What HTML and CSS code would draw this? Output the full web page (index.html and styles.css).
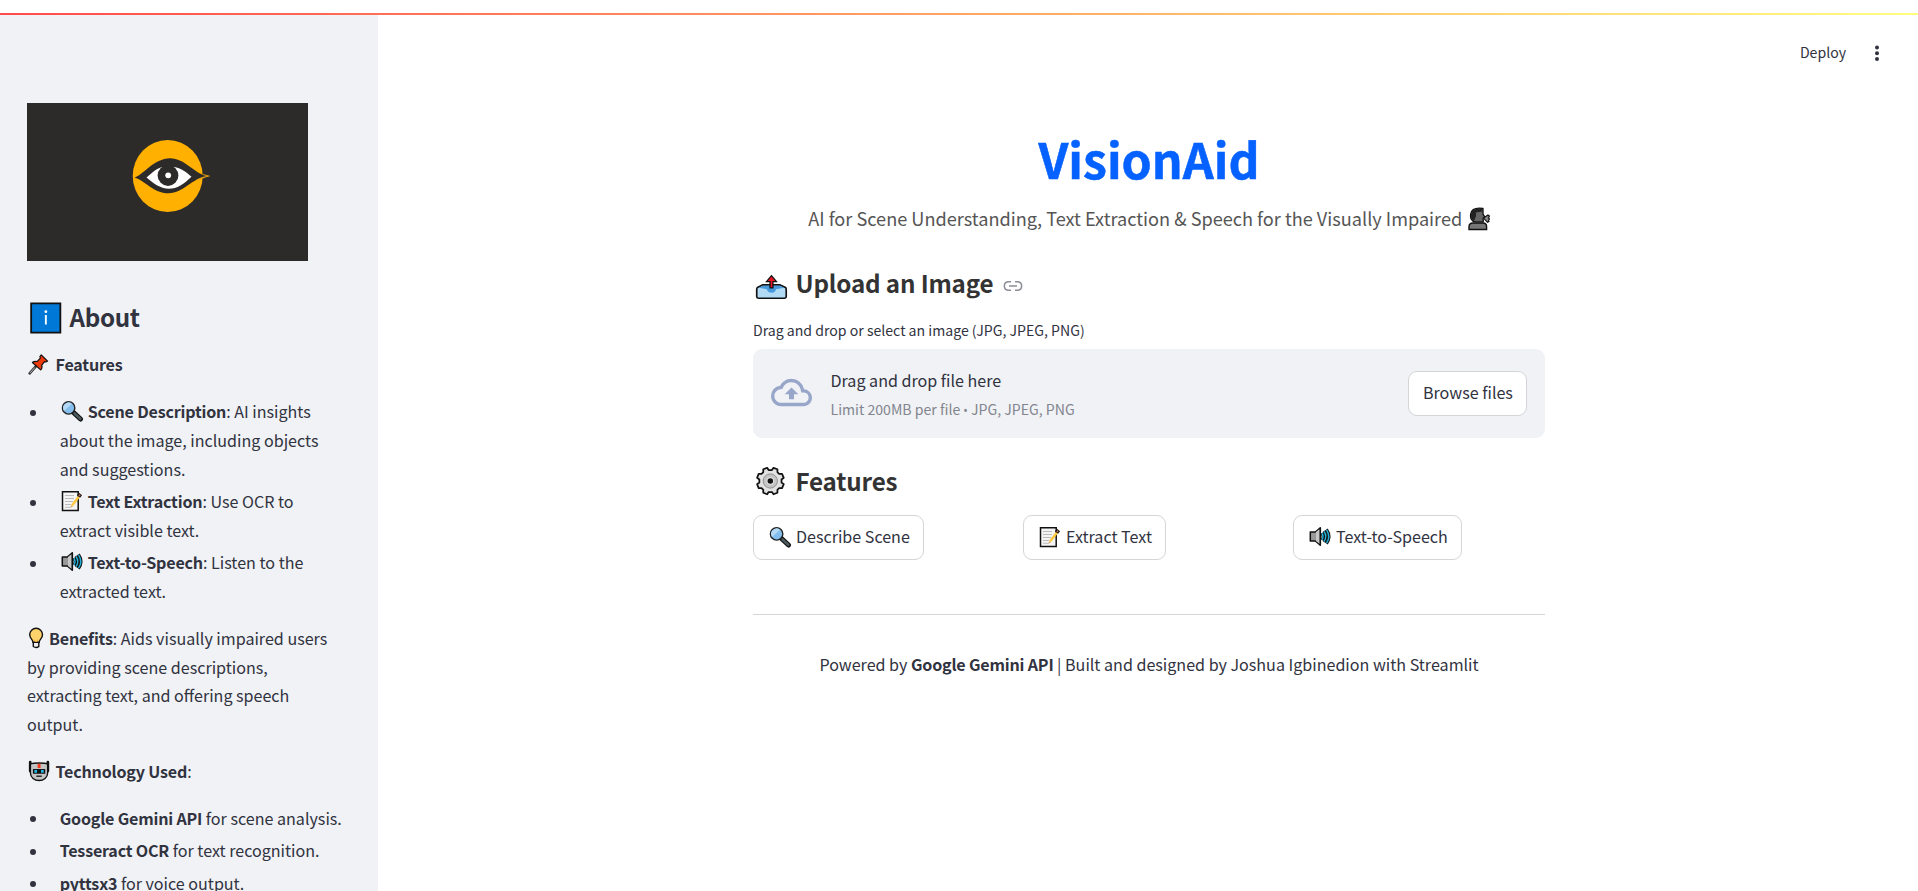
FILE: index.html
```html
<!DOCTYPE html>
<html lang="en">
<head>
<meta charset="utf-8">
<title>VisionAid</title>
<link rel="stylesheet" href="styles.css">
</head>
<body>
<svg class="defs" width="0" height="0" aria-hidden="true">
  <symbol id="glass" viewBox="0 0 28 22">
    <path d="M13.5 12.5 20.500 19" stroke="#111" stroke-width="5" stroke-linecap="round"/>
    <path d="M14.500 13.500 20.300 18.800" stroke="#4b5a5e" stroke-width="2.600" stroke-linecap="round"/>
    <circle cx="8.600" cy="7.900" r="6.200" fill="#83beec" stroke="#222" stroke-width="1.400"/>
    <path d="M4 11A5.500 5.500 0 0 1 12 3.700z" fill="#b5daf5"/>
  </symbol>
  <symbol id="memo" viewBox="0 0 28 22">
    <path d="M2.500 1.800h15.700v18.700H2.500z" fill="#f4f4f4" stroke="#111" stroke-width="1.500"/>
    <path d="M5 5.500h9M5 8.500h9M5 11.500h8M5 14.500h6M5 17.300h6" stroke="#bbb" stroke-width="1.100"/>
    <path d="M12 15.500 19 6.500" stroke="#fdc83c" stroke-width="2.400"/>
    <path d="m18.500 6.500 2-2.500" stroke="#111" stroke-width="4"/>
    <path d="m19 6 1.200-1.500" stroke="#b66a55" stroke-width="1.700"/>
    <path d="m10.500 17.500.8-2.300 1.600 1.200z" fill="#d59c55"/>
  </symbol>
  <symbol id="speaker" viewBox="0 0 28 22">
    <path d="M2.300 6h5l5-4.200v17.400L7.300 15h-5z" fill="#999" stroke="#111" stroke-width="1.500" stroke-linejoin="round"/>
    <path d="M8 6v9l3.700 3V3z" fill="#c7c7c7"/>
    <path d="M14 7q2 3.500 0 7M16 5q3.800 5.500 0 11M18.500 3.300q5 7.200 0 14.400" fill="none" stroke="#111" stroke-width="3"/>
    <path d="M14 7.300q2 3.200 0 6.400M16 5.500q3.600 5 0 10M18.500 3.800q4.600 6.700 0 13.400" fill="none" stroke="#24b6df" stroke-width="1.400"/>
    <path d="M12.300 1.800v17.400" stroke="#111" stroke-width="1.500"/>
  </symbol>
</svg>

<div class="topbar"></div>
<div class="app">
  <aside class="sidebar">
    <svg class="logo" viewBox="0 0 281 158">
      <rect width="281" height="158" fill="#2d2b29"/>
      <ellipse cx="140.700" cy="73" rx="35" ry="36" fill="#ffb000"/>
      <path d="M172 70.500q6 .9 11.500 2.500-6 1.500-11.500 4z" fill="#e8a213"/>
      <path d="M107.500 74.700C116 72 127 55.500 143 55.300c15 0 24 15.200 37 17.800-15 2-23 17.200-38.500 17.200C126 90.300 118 77 107.500 74.700z" fill="#2d2b29"/>
      <path d="M119.500 74.500C126 69 130 65 136 64q5-1 11 0c7 1 12 5 17.500 9.700C157 81 150 85.700 142 85.700c-9 0-16-5.700-22.500-11.200z" fill="#fff"/>
      <circle cx="141" cy="72.500" r="10.400" fill="#2d2b29"/>
      <path d="M134.500 63.300 137 67h8l2-4z" fill="#2d2b29"/>
      <circle cx="141.200" cy="72.300" r="2.900" fill="#fff"/>
    </svg>

    <h2 class="about"><svg class="info" viewBox="0 0 42 32"><path d="M3.900 1.400h29.200v29.200H3.900z" fill="#0078d7" stroke="#111" stroke-width="1.800"/><path d="M18.600 13v9.500" stroke="#fff" stroke-width="1.900"/><circle cx="18.600" cy="9.700" r="1.400" fill="#fff"/></svg>About</h2>

    <p class="line"><svg class="em29" viewBox="0 0 29 22"><path d="M2.700 20.500 9 13.500" stroke="#333" stroke-width="2.600" stroke-linecap="round"/><path d="M3 20.200 8 14.500" stroke="#ccc" stroke-width=".9"/><path d="m14.500 1.800 6.500 6.200-1.800 1-1.400-.4-2.900 3.700c.8 2 .2 3.600-1 4.700L5.500 9.500c1.400-1.300 3-1.500 4.700-1L13.600 5l-.5-1.500z" fill="#ec3a0c" stroke="#111" stroke-width="1.200" stroke-linejoin="round"/></svg><b>Features</b></p>

    <ul class="list">
      <li><div><svg class="em28"><use href="#glass"/></svg><b>Scene Description</b>: AI insights<br>about the image, including objects<br>and suggestions.</div></li>
      <li><div><svg class="em28"><use href="#memo"/></svg><b>Text Extraction</b>: Use OCR to<br>extract visible text.</div></li>
      <li><div><svg class="em28"><use href="#speaker"/></svg><b>Text-to-Speech</b>: Listen to the<br>extracted text.</div></li>
    </ul>

    <p class="line"><svg class="em22" viewBox="0 0 22 22"><path d="M6.300 15v4.500q3 2 5.500 0V15z" fill="#eee" stroke="#111" stroke-width="1.400"/><path d="M6 15.200C6 12.500 2.700 11.500 2.700 7.700a6.400 6.400 0 0 1 12.800 0c0 3.800-3.300 4.800-3.300 7.500z" fill="#ffd36b" stroke="#111" stroke-width="1.400"/><path d="M7.200 12.500 9 15l1.800-2.500" fill="none" stroke="#f4ae35" stroke-width="1"/></svg><b>Benefits</b>: Aids visually impaired users<br>by providing scene descriptions,<br>extracting text, and offering speech<br>output.</p>

    <p class="line tech"><svg class="em29" viewBox="0 0 29 22"><path d="M3.300 2v9M21.200 2v9" stroke="#111" stroke-width="2.800" stroke-linecap="round"/><path d="M3.500 4c3-1.500 14.500-1.500 17.500 0v9c0 4.500-4 7.700-8.700 7.700S3.500 17.500 3.500 13z" fill="#c4c4c4" stroke="#111" stroke-width="1.400"/><path d="M6 9h12.600v4.800H6z" fill="#111"/><path d="M7.500 11.400h2.700M14.300 11.400H17" stroke="#20b8e8" stroke-width="2.600"/><path d="M12.300 3.600v4.400" stroke="#f13a1c" stroke-width="3"/><path d="M9.500 16.300H15" stroke="#111" stroke-width="1.300"/></svg><b>Technology Used</b>:</p>

    <ul class="list">
      <li><div><b>Google Gemini API</b> for scene analysis.</div></li>
      <li><div><b>Tesseract OCR</b> for text recognition.</div></li>
      <li><div><b>pyttsx3</b> for voice output.</div></li>
    </ul>
  </aside>

  <main class="main">
    <header class="toolbar">
      <span class="deploy">Deploy</span>
      <svg class="dots" viewBox="0 0 6 18"><circle cx="3" cy="2.500" r="2"/><circle cx="3" cy="8.200" r="2"/><circle cx="3" cy="13.900" r="2"/></svg>
    </header>
    <div class="block">
      <h1 class="title"><span>VisionAid</span></h1>
      <p class="subtitle"><span>AI for Scene Understanding, Text Extraction &amp; Speech for the Visually Impaired</span><svg class="head" viewBox="0 0 22 24"><path d="M1 22.500v-2.700q0-3.800 4-3.800h10q3.600 0 3.600 3.800v2.700z" fill="#777" stroke="#111" stroke-width="1.400"/><path d="M15 2.500V7l2 3.300-1.800 1v3.500H7C3.500 14.500 2 11 2.700 7 3.500 2.500 8 .5 15 1.500z" fill="#666" stroke="#111" stroke-width="1.300"/><path d="M3 9C2.500 3.500 8 .5 14.500 2v2.500L8 5.500v3.500L6 14C4 13 3 11 3 9z" fill="#222"/><path d="m15.500 11 4.500-3 1.500 1-1 2 1 1-1 1.500.5 1-1.500.8z" fill="#888" stroke="#111" stroke-width="1.100"/></svg></p>

      <h3 class="heading upload"><svg class="tray" viewBox="0 0 44 28"><path d="M4.500 14.500 10 11.800h17.500l5.700 2.700q.8.700.8 2v7.300q0 1.700-1.700 1.700H5.500q-1.700 0-1.700-1.700v-7.300q0-1.300.7-2z" fill="#b1daf4" stroke="#111" stroke-width="1.700"/><path d="m6 14.800 4.500-2h16.800l4.700 2-8.500 1.500q-.5 3.500-4.500 3.500t-4.800-3.500z" fill="#489adf"/><path d="m18.900 2.400 5.100 6h-3.600v6.500h-3V8.400h-3.600z" fill="#e81224" stroke="#111" stroke-width="1.300"/></svg><span>Upload an Image</span><svg class="link" viewBox="0 0 22 12"><path d="M9 1.800H6a4.300 4.300 0 0 0 0 8.500h3M13 1.800h3a4.300 4.300 0 0 1 0 8.500h-3M7 6h8" fill="none" stroke="#8c8e97" stroke-width="1.500"/></svg></h3>

      <p class="label">Drag and drop or select an image (JPG, JPEG, PNG)</p>
      <section class="dropzone">
        <svg class="cloud" viewBox="0 0 24 24"><path d="M19.350 10.040A7.490 7.490 0 0 0 12 4C9.110 4 6.600 5.640 5.350 8.040A5.994 5.994 0 0 0 0 14c0 3.310 2.690 6 6 6h13c2.760 0 5-2.240 5-5 0-2.640-2.050-4.780-4.650-4.960zM19 18H6c-2.210 0-4-1.790-4-4 0-2.050 1.530-3.760 3.560-3.970l1.070-.11.500-.95A5.469 5.469 0 0 1 12 6c2.620 0 4.880 1.860 5.390 4.430l.3 1.500 1.530.11A2.980 2.980 0 0 1 22 15c0 1.650-1.350 3-3 3zM8 13h2.550v3h2.900v-3H16l-4-4z" fill="#98a7c9"/></svg>
        <div class="droptext"><div class="drop1">Drag and drop file here</div><div class="drop2">Limit 200MB per file <span class="bullet">•</span> JPG, JPEG, PNG</div></div>
        <button class="btn browse"><span>Browse files</span></button>
      </section>

      <h3 class="heading feats"><svg class="tray gear" viewBox="0 0 44 30"><path d="M14.500 1.500 16 3.800h3.400l1.600-2.300 4 1.500v3l1.700 1.700h3l1.800 4-2.300 1.700v3.200l2.300 1.700-1.800 4h-3L25 24v3l-4 1.600-1.600-2.300H16l-1.500 2.300-4-1.600v-3l-1.700-1.700h-3l-1.600-4 2.300-1.700v-3.200L4.200 11.700l1.600-4h3L10.500 6V3z" fill="#e2e2e2" stroke="#111" stroke-width="1.800" stroke-linejoin="round"/><circle cx="17.700" cy="15" r="7.300" fill="#c4c4c4" stroke="#888" stroke-width=".9"/><circle cx="17.700" cy="15" r="4" fill="#ddd"/><circle cx="17.700" cy="15" r="2.800" fill="#111"/></svg><span>Features</span></h3>

      <div class="cols">
        <div><button class="btn describe"><svg class="em28"><use href="#glass"/></svg><span>Describe Scene</span></button></div>
        <div><button class="btn extract"><svg class="em28"><use href="#memo"/></svg><span>Extract Text</span></button></div>
        <div><button class="btn speech"><svg class="em28"><use href="#speaker"/></svg><span>Text-to-Speech</span></button></div>
      </div>
      <hr class="rule">
      <p class="footer">Powered by <b>Google Gemini API</b> | Built and designed by Joshua Igbinedion with Streamlit</p>
    </div>
  </main>
</div>
</body>
</html>
```
FILE: styles.css
```css
* { box-sizing: border-box; }
html, body { height: 100%; }
body {
  margin: 0;
  overflow: hidden;
  background: #fff;
  color: #31333f;
  font: 400 16.09px/28.8px "Source Sans Pro", "Noto Sans CJK SC", sans-serif;
  white-space: nowrap;
}
h1, h2, h3, p, ul { margin: 0; padding: 0; }
b { font-weight: 600; letter-spacing: -.19px; }
svg { flex: none; }
.defs { display: block; height: 0; }

.topbar {
  height: 15px;
  padding-top: 13px;
  background: linear-gradient(90deg, #ff4b4b, #fffd80) content-box;
}
.app { display: flex; height: 876px; }

.sidebar {
  width: 378px;
  flex: none;
  overflow: hidden;
  padding: 88px 0 0 27px;
  background: #f0f2f6;
}
.logo { display: block; width: 281px; height: 158px; }
.about {
  display: flex;
  margin: 40px 0 16.800px;
  font-size: 24.2px;
  font-weight: 600;
  line-height: 32.4px;
  letter-spacing: -.35px;
}
.info { width: 42.500px; height: 32px; margin-top: .5px; }
.em28, .em29, .em22 { height: 22px; vertical-align: -4px; }
.em28 { width: 28px; }
.em29 { width: 28.500px; }
.em22 { width: 22px; }
.tech { margin-top: 18px; }
.list {
  display: flex;
  flex-direction: column;
  gap: 3.6px;
  margin: 18px 0;
  list-style: none;
}
.list li { display: grid; grid-template-columns: 32.700px 1fr; }
.list li::before {
  content: "";
  width: 6px;
  height: 6px;
  margin: 12.500px 0 0 3px;
  border-radius: 50%;
  background: #31333f;
}

.main { flex: 1; }
.toolbar {
  display: flex;
  justify-content: flex-end;
  align-items: center;
  height: 76px;
  padding-right: 38px;
  font-size: 14.1px;
}
.deploy { margin-bottom: 2px; }
.dots { width: 6px; height: 18px; margin: 2px 0 0 28px; fill: #31333f; }
.block { width: 792px; margin: 35px 0 0 375px; }
.title {
  height: 64.8px;
  color: #0561ff;
  font-size: 48.3px;
  font-weight: 700;
  line-height: 64.8px;
  text-align: center;
  -webkit-text-stroke: .5px #0561ff;
}
.subtitle {
  display: flex;
  justify-content: center;
  height: 34.6px;
  margin-top: 10.200px;
  color: #555;
  font-size: 18.15px;
  line-height: 34.6px;
}
.head { width: 22px; height: 24px; margin: 6px 0 0 5.500px; }
.heading {
  display: flex;
  height: 32.4px;
  color: #333;
  font-size: 24.2px;
  font-weight: 700;
  line-height: 32.4px;
  letter-spacing: -.16px;
}
.upload { margin-top: 31.400px; }
.tray { width: 43px; height: 28px; margin: 6.500px 0 0 -.5px; }
.gear { height: 30px; margin-top: 1px; }
.link { width: 22px; height: 12px; margin: 13.500px 0 0 8.500px; }
.label { height: 24px; margin-top: 18.600px; font-size: 14.1px; line-height: 24px; }
.dropzone {
  display: flex;
  align-items: center;
  height: 89px;
  margin: 7px 0 27px;
  padding: 0 18px;
  border-radius: 9px;
  background: #f0f2f6;
}
.cloud { width: 41px; height: 41px; margin-bottom: 1px; }
.droptext { flex: 1; margin: 5px 0 0 18.500px; }
.drop2 { color: #83858e; font-size: 14.1px; line-height: 30px; }
.bullet { font-family: "Noto Sans", sans-serif; font-size: 12px; }
.btn {
  display: flex;
  align-items: center;
  height: 45px;
  padding: 0 14px 1px;
  border: 1px solid #d4d5d8;
  border-radius: 9px;
  background: #fff;
  color: inherit;
  font: inherit;
}
.btn span { margin-bottom: 1px; }
.browse { width: 119px; }
.describe { width: 171px; }
.extract { width: 143px; }
.speech { width: 169px; }
.cols {
  display: grid;
  grid-template-columns: repeat(3, 252px);
  gap: 18px;
  margin-top: 17.600px;
}
.rule { height: 1px; margin: 54px 0 35px; border: 0; background: #d6d6d9; }
.footer { text-align: center; }
```
